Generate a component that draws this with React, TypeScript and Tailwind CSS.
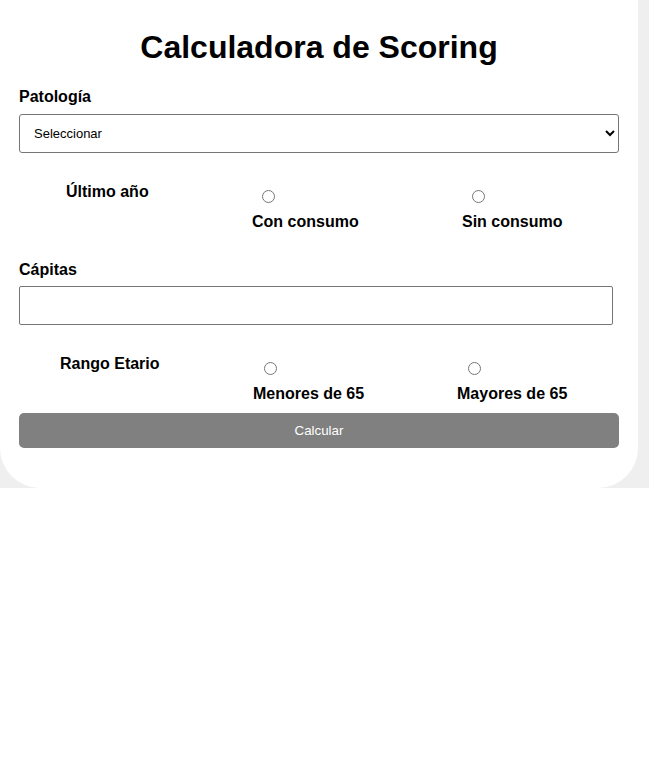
export default function App() {
  return (
    <div className="w-[649px] bg-[#efefef] font-['Liberation_Sans',Arial,sans-serif] text-black">
      <div className="w-[638px] bg-white rounded-b-[40px] px-[19px] pt-[29px] pb-[40px]">
        <h1 className="text-[32px] font-bold text-center leading-[37px]">Calculadora de Scoring</h1>

        <label className="block mt-[22px] text-[16px] font-bold leading-[18px]">Patología</label>
        <select className="mt-[8px] w-full h-[39px] border border-[#767676] rounded-[3px] pl-[10px] pr-[4px] text-[13px] bg-white">
          <option>Seleccionar</option>
        </select>

        {/* Último año */}
        <div className="flex mt-[30px] text-[16px] font-bold leading-[18px]">
          <div className="w-[233px] pl-[47px]">Último año</div>
          <div className="w-[210px] flex flex-col">
            <input type="radio" name="consumo" className="m-0 mt-[7px] ml-[10px] w-[13px] h-[13px]" />
            <span className="mt-[10px]">Con consumo</span>
          </div>
          <div className="flex flex-col">
            <input type="radio" name="consumo" className="m-0 mt-[7px] ml-[10px] w-[13px] h-[13px]" />
            <span className="mt-[10px]">Sin consumo</span>
          </div>
        </div>

        <label className="block mt-[30px] text-[16px] font-bold leading-[18px]">Cápitas</label>
        <input type="text" className="block mt-[7px] w-[594px] h-[39px] border border-[#767676] rounded-[2px] px-[2px] text-[13px]" />

        {/* Rango etario */}
        <div className="flex mt-[30px] text-[16px] font-bold leading-[18px]">
          <div className="w-[234px] pl-[41px]">Rango Etario</div>
          <div className="w-[204px] flex flex-col">
            <input type="radio" name="edad" className="m-0 mt-[7px] ml-[11px] w-[13px] h-[13px]" />
            <span className="mt-[10px]">Menores de 65</span>
          </div>
          <div className="flex flex-col">
            <input type="radio" name="edad" className="m-0 mt-[7px] ml-[11px] w-[13px] h-[13px]" />
            <span className="mt-[10px]">Mayores de 65</span>
          </div>
        </div>

        <button className="block mt-[10px] w-full h-[35px] rounded-[5px] bg-[#808080] text-white text-[13.33px]">
          Calcular
        </button>
      </div>
    </div>
  );
}
